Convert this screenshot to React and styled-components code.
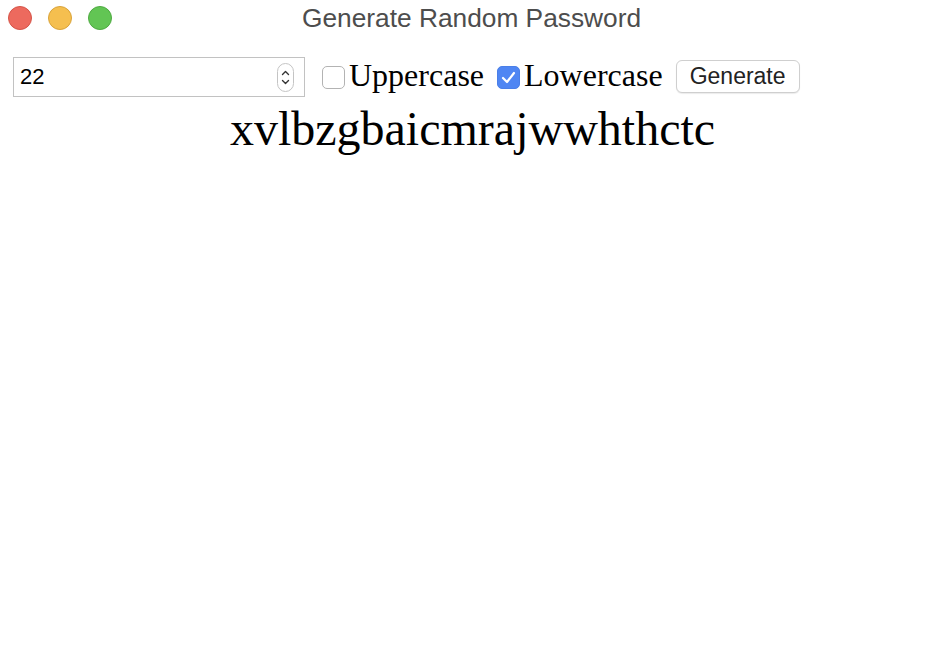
import styled, { createGlobalStyle } from 'styled-components';

const Global = createGlobalStyle`
  html, body {
    margin: 0;
    padding: 0;
    background: #fff;
  }
`;

export default function App() {
  return (
    <Window>
      <Global />
      <TitleBar>
        <Lights>
          <Light color="#ed6a5e" edge="#d55448" />
          <Light color="#f5bf4f" edge="#d9a33a" />
          <Light color="#62c554" edge="#4eaa41" />
        </Lights>
        <Title>Generate Random Password</Title>
      </TitleBar>
      <Toolbar>
        <NumberField>
          <NumberInput type="text" defaultValue="22" />
          <Stepper width="17" height="29" viewBox="0 0 17 29">
            <rect x="0.5" y="0.5" width="16" height="28" rx="8" fill="#fff" stroke="#c4c4c4" />
            <path d="M5.5 11.5 L8.5 8.5 L11.5 11.5" fill="none" stroke="#333" strokeWidth="1.4" strokeLinecap="round" strokeLinejoin="round" />
            <path d="M5.5 17.5 L8.5 20.5 L11.5 17.5" fill="none" stroke="#333" strokeWidth="1.4" strokeLinecap="round" strokeLinejoin="round" />
          </Stepper>
        </NumberField>
        <Option>
          <Box checked={false} />
          Uppercase
        </Option>
        <Option>
          <Box checked>
            <svg width="15" height="13" viewBox="0 0 15 13">
              <path d="M2 7 L6 11 L13 2" fill="none" stroke="#fff" strokeWidth="2.2" strokeLinecap="round" strokeLinejoin="round" />
            </svg>
          </Box>
          Lowercase
        </Option>
        <Button>Generate</Button>
      </Toolbar>
      <Password>xvlbzgbaicmrajwwhthctc</Password>
    </Window>
  );
}

const Window = styled.div`
  width: 945px;
  height: 672px;
  background: #fff;
`;

const TitleBar = styled.div`
  position: relative;
  height: 36px;
  display: flex;
  align-items: center;
  justify-content: center;
`;

const Lights = styled.div`
  position: absolute;
  left: 8px;
  top: 6px;
  display: flex;
  gap: 16px;
`;

const Light = styled.span`
  width: 24px;
  height: 24px;
  border-radius: 50%;
  box-sizing: border-box;
  background: ${(p) => p.color};
  border: 1px solid ${(p) => p.edge};
`;

const Title = styled.div`
  font-family: "Liberation Sans", Arial, sans-serif;
  font-size: 26.3px;
  color: #4d4d4d;
  transform: translateX(-1px);
`;

const Toolbar = styled.div`
  display: flex;
  align-items: center;
  padding: 21px 0 0 13px;
`;

const NumberField = styled.div`
  width: 292px;
  height: 40px;
  box-sizing: border-box;
  border: 1px solid #c2c2c2;
  display: flex;
  align-items: center;
  padding: 0 10px 0 6px;
  margin-right: 17px;
`;

const NumberInput = styled.input`
  flex: 1;
  min-width: 0;
  width: 0;
  border: none;
  outline: none;
  padding: 0;
  font-family: "Liberation Sans", Arial, sans-serif;
  font-size: 22px;
  color: #000;
  background: transparent;
`;

const Stepper = styled.svg`
  display: block;
  flex-shrink: 0;
`;

const Option = styled.label`
  display: flex;
  align-items: center;
  gap: 4px;
  margin-right: 13px;
  font-family: "Liberation Serif", "Times New Roman", serif;
  font-size: 32px;
  line-height: 36px;
  color: #000;
  margin-top: -4px;
`;

const Box = styled.span`
  width: 23px;
  height: 23px;
  box-sizing: border-box;
  border-radius: 5px;
  display: flex;
  align-items: center;
  justify-content: center;
  margin-top: 4px;
  background: ${(p) => (p.checked ? '#4f86f3' : '#fff')};
  border: 1px solid ${(p) => (p.checked ? '#4a7fe8' : '#b3b3b3')};
`;

const Button = styled.button`
  width: 124px;
  height: 33px;
  margin-top: -2px;
  border: 1px solid #cfcfcf;
  border-radius: 6px;
  background: #fff;
  box-shadow: 0 1px 1px rgba(0, 0, 0, 0.08);
  font-family: "Liberation Sans", Arial, sans-serif;
  font-size: 23px;
  color: #222;
  padding: 0;
`;

const Password = styled.div`
  text-align: center;
  font-family: "Liberation Serif", "Times New Roman", serif;
  font-size: 48px;
  color: #000;
  margin-top: 4px;
`;
